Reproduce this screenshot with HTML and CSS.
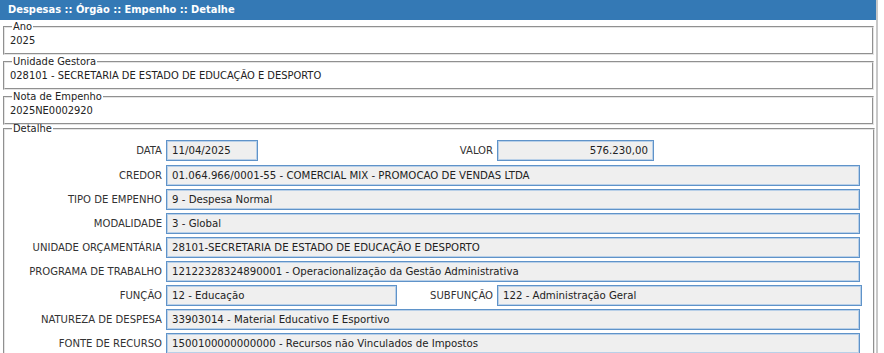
FILE: index.html
```html
<!DOCTYPE html>
<html lang="pt-BR">
<head>
  <meta charset="UTF-8">
  <title>Despesas :: Órgão :: Empenho :: Detalhe</title>
  <link rel="stylesheet" href="styles.css">
</head>
<body>
  <div class="pagina">
    <header class="titulo">Despesas :: Órgão :: Empenho :: Detalhe</header>

    <fieldset class="grupo primeiro">
      <legend>Ano</legend>
      <div class="valor">2025</div>
    </fieldset>

    <fieldset class="grupo">
      <legend>Unidade Gestora</legend>
      <div class="valor">028101 - SECRETARIA DE ESTADO DE EDUCAÇÃO E DESPORTO</div>
    </fieldset>

    <fieldset class="grupo">
      <legend>Nota de Empenho</legend>
      <div class="valor">2025NE0002920</div>
    </fieldset>

    <fieldset class="grupo detalhe">
      <legend>Detalhe</legend>

      <div class="linha linha-topo">
        <span class="rotulo">DATA</span>
        <span class="campo campo-data">11/04/2025</span>
        <span class="rotulo rotulo-largo">VALOR</span>
        <span class="campo campo-valor">576.230,00</span>
      </div>

      <div class="linha">
        <span class="rotulo">CREDOR</span>
        <span class="campo campo-cheio">01.064.966/0001-55 - COMERCIAL MIX - PROMOCAO DE VENDAS LTDA</span>
      </div>

      <div class="linha">
        <span class="rotulo">TIPO DE EMPENHO</span>
        <span class="campo campo-cheio">9 - Despesa Normal</span>
      </div>

      <div class="linha">
        <span class="rotulo">MODALIDADE</span>
        <span class="campo campo-cheio">3 - Global</span>
      </div>

      <div class="linha">
        <span class="rotulo">UNIDADE ORÇAMENTÁRIA</span>
        <span class="campo campo-cheio">28101-SECRETARIA DE ESTADO DE EDUCAÇÃO E DESPORTO</span>
      </div>

      <div class="linha">
        <span class="rotulo">PROGRAMA DE TRABALHO</span>
        <span class="campo campo-cheio">12122328324890001 - Operacionalização da Gestão Administrativa</span>
      </div>

      <div class="linha">
        <span class="rotulo">FUNÇÃO</span>
        <span class="campo campo-funcao">12 - Educação</span>
        <span class="rotulo rotulo-curto">SUBFUNÇÃO</span>
        <span class="campo campo-subfuncao">122 - Administração Geral</span>
      </div>

      <div class="linha">
        <span class="rotulo">NATUREZA DE DESPESA</span>
        <span class="campo campo-cheio">33903014 - Material Educativo E Esportivo</span>
      </div>

      <div class="linha">
        <span class="rotulo">FONTE DE RECURSO</span>
        <span class="campo campo-cheio">1500100000000000 - Recursos não Vinculados de Impostos</span>
      </div>
    </fieldset>
  </div>
</body>
</html>
```

FILE: styles.css
```css
* {
  box-sizing: border-box;
}

body {
  margin: 0;
  background: #fff;
  font-family: 'DejaVu Sans Condensed', 'DejaVu Sans', sans-serif;
  font-size: 11px;
  color: #222;
  overflow: hidden;
}

.pagina {
  width: 878px;
  height: 353px;
  border-right: 2px solid #c8c8c8;
}

.titulo {
  height: 20px;
  line-height: 20px;
  padding-left: 8px;
  background-color: #3479b5;
  color: #fff;
  font-weight: bold;
  font-size: 11px;
}

.grupo {
  margin: 1px 2px 0 3px;
  padding: 0 8px 4px 5px;
  border: 2px groove #e4e4e4;
}

.primeiro {
  margin-top: 1px;
}

.grupo legend {
  padding: 0 1px;
  margin-left: 2px;
  line-height: 12px;
  font-size: 11px;
  color: #222;
}

.valor {
  line-height: 16px;
  font-size: 11px;
}

.detalhe {
  margin-top: -2px;
  padding: 5px 11px 0 0;
}

.detalhe legend {
  margin-left: 7px;
}

.linha {
  display: flex;
  align-items: center;
  gap: 4px;
  margin-bottom: 3px;
}

.linha-topo {
  margin-bottom: 4px;
}

.rotulo {
  width: 157px;
  flex: none;
  text-align: right;
  font-size: 11.2px;
  color: #333;
}

.rotulo-largo {
  width: 231px;
}

.rotulo-curto {
  width: 92px;
}

.campo {
  display: block;
  height: 21px;
  line-height: 19px;
  padding: 0 5px;
  background-color: #efefef;
  border: 1px solid #5f93c9;
  box-shadow: inset 0 0 0 1px #b9d0e8;
  font-family: 'DejaVu Sans', sans-serif;
  font-size: 10.2px;
  color: #222;
  white-space: nowrap;
  overflow: hidden;
}

.campo-data {
  width: 92px;
}

.campo-valor {
  width: 157px;
  text-align: right;
}

.campo-cheio {
  width: 694px;
}

.campo-funcao {
  width: 231px;
}

.campo-subfuncao {
  width: 365px;
}
```
